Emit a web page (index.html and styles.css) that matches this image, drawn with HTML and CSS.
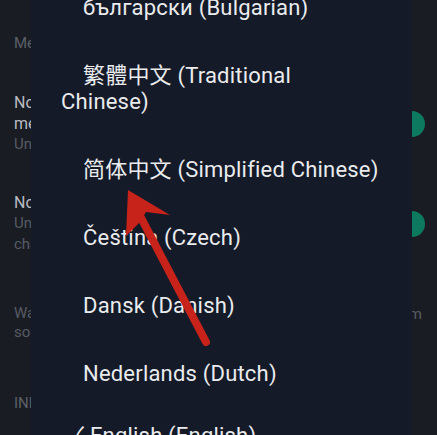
FILE: index.html
```html
<!DOCTYPE html>
<html>
<head>
<meta charset="utf-8">
<link rel="stylesheet" href="styles.css">
</head>
<body>
<div class="screen">
  <div class="page">
    <div class="section">Messages</div>
    <div class="row">
      <div class="texts">
        <div class="title">Notifications</div>
        <div class="title">message preview</div>
        <div class="sub">Unlock to see</div>
      </div>
      <div class="toggle"></div>
    </div>
    <div class="row row2">
      <div class="texts">
        <div class="title">Notification sound</div>
        <div class="sub">Unread messages</div>
        <div class="sub">chat alerts</div>
      </div>
      <div class="toggle"></div>
    </div>
    <div class="row row3">
      <div class="texts">
        <div class="sub">Wallpaper</div>
        <div class="sub small">some chats</div>
      </div>
      <div class="sub right">m</div>
    </div>
    <div class="section section2">INFO</div>
  </div>

  <div class="dialog">
    <ul class="langs">
      <li>български (Bulgarian)</li>
      <li>繁體中文 (Traditional<br>Chinese)</li>
      <li>简体中文 (Simplified Chinese)</li>
      <li>Čeština (Czech)</li>
      <li>Dansk (Danish)</li>
      <li>Nederlands (Dutch)</li>
      <li class="selected">✓ English (English)</li>
    </ul>
  </div>

  <svg class="arrow" width="437" height="435" viewBox="0 0 437 435">
    <line x1="206" y1="342" x2="137" y2="210" stroke="#c8231b" stroke-width="8" stroke-linecap="round"/>
    <polygon points="128,190 170,215 146,212 140,222 126,236" fill="#c8231b"/>
  </svg>
</div>
</body>
</html>
```
FILE: styles.css
```css
* { box-sizing: border-box; }
html, body { margin: 0; padding: 0; }
body {
  width: 437px;
  height: 435px;
  overflow: hidden;
  background: #1a1c23;
  font-family: Roboto, "Noto Sans", "Noto Sans CJK SC", sans-serif;
}
.screen {
  position: relative;
  width: 437px;
  height: 435px;
  overflow: hidden;
}
.page {
  display: flex;
  flex-direction: column;
  padding: 33px 12px 0 14px;
}
.section {
  font-size: 15px;
  line-height: 20px;
  color: #5b6068;
}
.section2 { margin-top: 52px; }
.row {
  display: flex;
  justify-content: space-between;
  align-items: center;
  margin-top: 39px;
}
.row2 { margin-top: 37px; }
.row3 { margin-top: 48px; align-items: flex-start; }
.texts { display: flex; flex-direction: column; }
.title {
  font-size: 16px;
  line-height: 21px;
  color: #b9bcc1;
}
.sub {
  font-size: 15px;
  line-height: 21px;
  color: #565b63;
}
.small { line-height: 17px; }
.right { margin-right: 3px; margin-top: 1px; }
.toggle {
  width: 26px;
  height: 26px;
  border-radius: 50%;
  background: #0d7a60;
}
.dialog {
  position: absolute;
  left: 31px;
  top: 0;
  width: 381px;
  height: 435px;
  overflow: hidden;
  background: #141a28;
}
.langs {
  list-style: none;
  margin: -26px 0 0 0;
  padding: 0;
}
.langs li {
  padding: 21px 0 21px 30px;
  text-indent: 22px;
  font-size: 22px;
  letter-spacing: 0.2px;
  line-height: 26px;
  color: #eaebed;
}
.langs li.selected {
  text-indent: 8px;
  margin-top: -6px;
}
.arrow {
  position: absolute;
  left: 0;
  top: 0;
}
```
